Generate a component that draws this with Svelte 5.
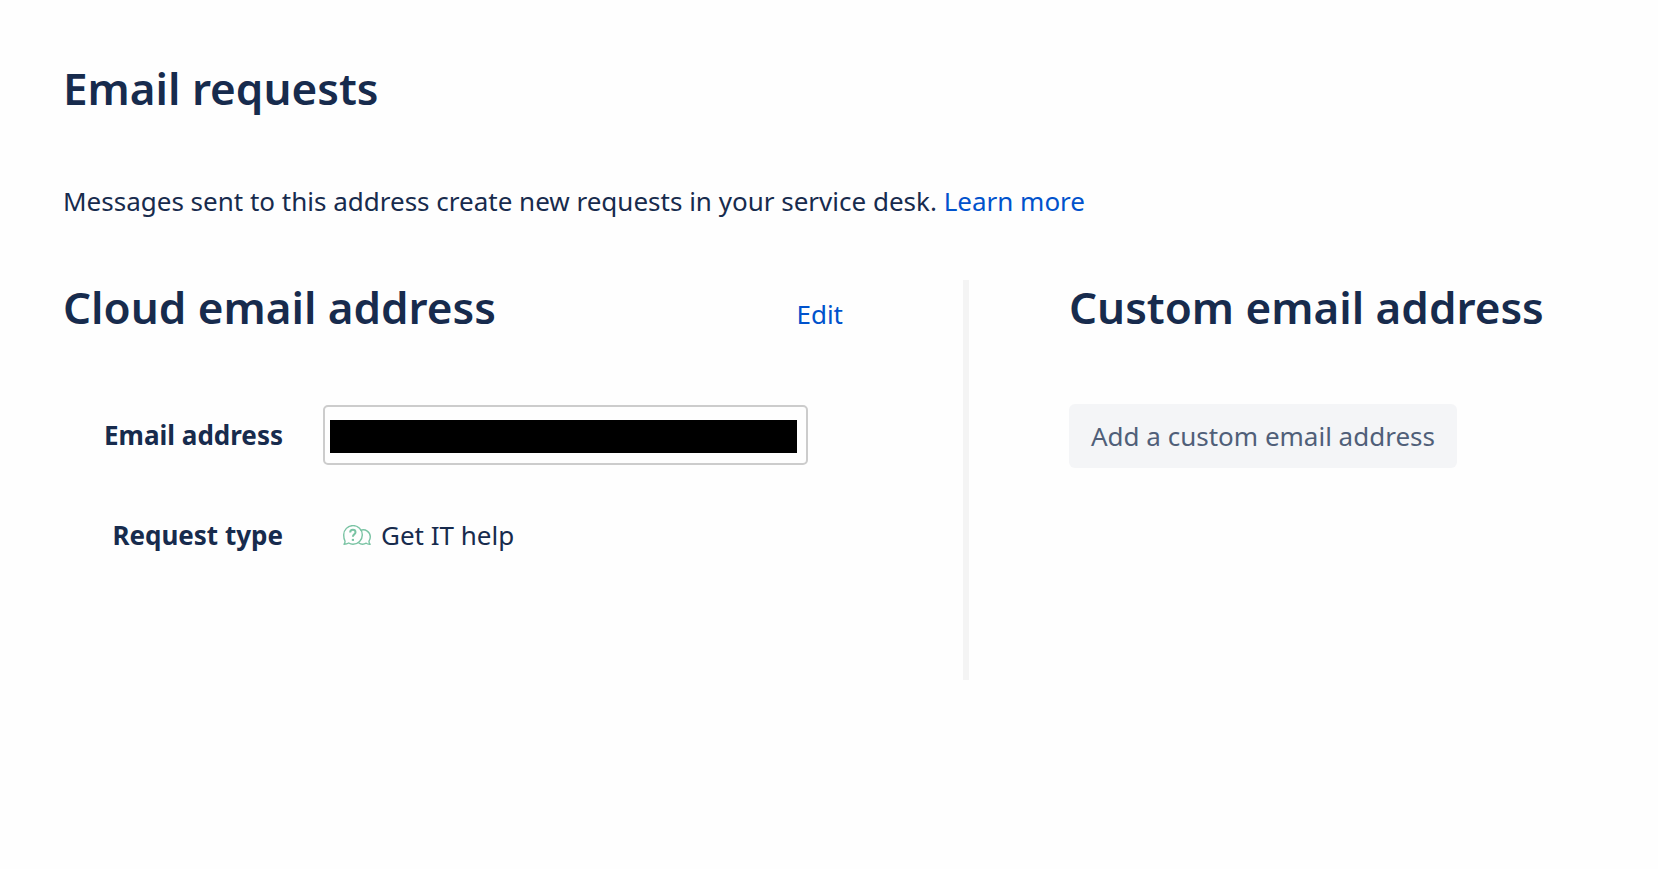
<script lang="ts">
    let email: string = "";
    let requestType: string = "Get IT help";
</script>

<main>
    <h1>Email requests</h1>
    <p class="intro">
        Messages sent to this address create new requests in your service desk.
        <a href="#learn-more">Learn more</a>
    </p>

    <div class="columns">
        <section class="cloud">
            <header>
                <h2>Cloud email address</h2>
                <a href="#edit">Edit</a>
            </header>

            <div class="row">
                <label for="email">Email address</label>
                <input id="email" type="text" value={email} readonly />
            </div>

            <div class="row">
                <span class="label">Request type</span>
                <div class="request-type">
                    <svg width="28" height="20" viewBox="0 0 28 20" fill="none" stroke="#79c3a3" stroke-width="1.4" stroke-linejoin="round" aria-hidden="true">
                        <path d="M1 19.200c.9-.8 1.100-1.900 1-3.200C1.100 14.400.7 12.300.7 10a9.300 9.300 0 1 1 9.300 9.200c-1.700 0-3-.4-4.300-1.200-1.400.9-3 1.200-4.700 1.200z" />
                        <path d="M17.500 5.300c5-1.800 9.800 1.700 9.800 6.500 0 1.700-.5 3.100-1.300 4.300-.1 1.300.2 2.300 1.100 3.100-1.500.1-2.800-.2-3.900-1-2.300 1.300-5.400 1.300-7.700-.4" />
                        <path d="M7.200 7.400c0-1.600 1-2.600 2.600-2.600s2.700 1 2.700 2.400c0 2-2.600 2.200-2.600 4.600" stroke-width="2" />
                        <path d="M9.900 13.900v2" stroke-width="2.200" />
                    </svg>
                    <span>{requestType}</span>
                </div>
            </div>
        </section>

        <section class="custom">
            <h2>Custom email address</h2>
            <button type="button">Add a custom email address</button>
        </section>
    </div>
</main>

<style>
    :global(body) {
        margin: 0;
        background-color: #fefefe;
    }
    main {
        padding: 54px 65px 54px 63px;
        color: #172b4d;
        font-family: "Segoe UI", "Noto Sans", sans-serif;
        font-size: 26px;
        line-height: 40px;
    }
    h1,
    h2 {
        margin: 0;
        font-size: 44px;
        font-weight: 600;
        line-height: 68px;
    }
    .intro {
        margin: 59px 0;
    }
    a {
        color: #0052cc;
        text-decoration: none;
    }
    .columns {
        display: grid;
        grid-template-columns: 10fr 7fr;
        min-height: 400px;
    }
    header {
        display: flex;
        justify-content: space-between;
        align-items: baseline;
        padding-right: 120px;
        margin-bottom: 71px;
    }
    h2 {
        line-height: 54px;
    }
    .row {
        display: grid;
        grid-template-columns: 220px 1fr;
        align-items: center;
        gap: 40px;
        min-height: 60px;
        padding-right: 155px;
        margin-bottom: 40px;
    }
    label,
    .label {
        font-weight: 700;
        text-align: right;
    }
    input {
        box-sizing: border-box;
        width: 100%;
        height: 60px;
        padding: 13px 9px 10px 5px;
        border: 2px solid #ccc;
        border-radius: 5px;
        color: #000;
        background: #000 content-box;
        font: inherit;
    }
    .request-type {
        display: flex;
        align-items: center;
        gap: 10px;
        padding-left: 20px;
    }
    .custom {
        padding-left: 100px;
        border-left: 6px solid #f4f4f4;
    }
    button {
        height: 64px;
        margin-top: 70px;
        padding: 0 22px;
        border: 0;
        border-radius: 6px;
        color: #505f79;
        background-color: #f4f5f7;
        font: inherit;
        white-space: nowrap;
    }
</style>
